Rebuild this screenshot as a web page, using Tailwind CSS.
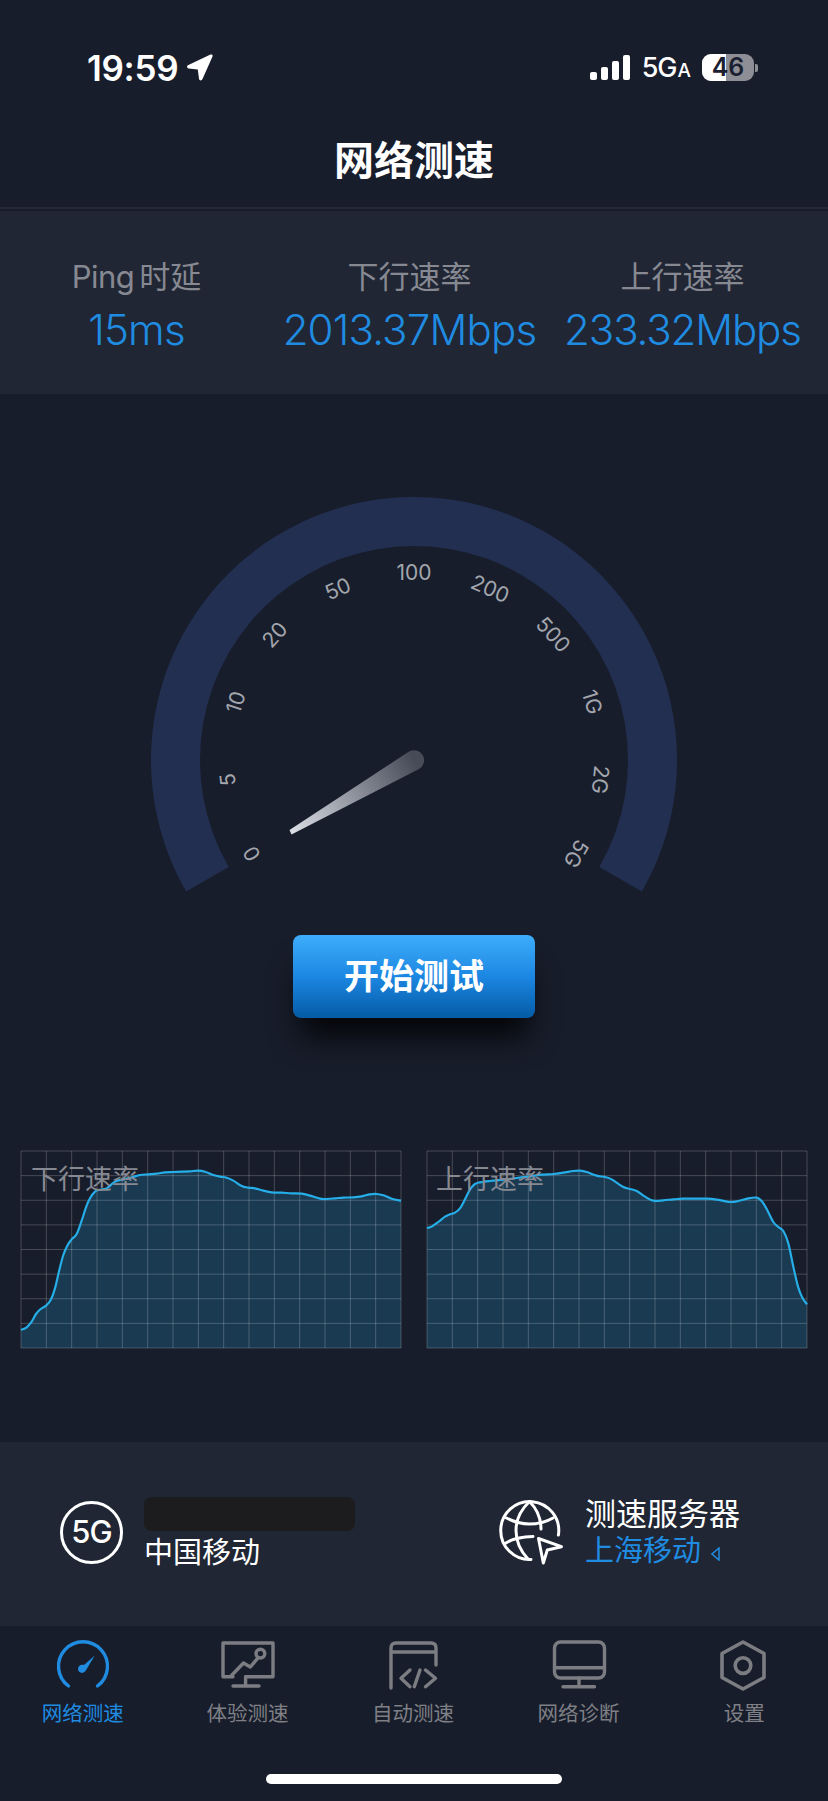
<!DOCTYPE html>
<html lang="zh-CN">
<head>
  <meta charset="UTF-8" />
  <meta name="viewport" content="width=device-width, initial-scale=1.0" />
  <title>网络测速</title>
  <script src="https://cdn.jsdelivr.net/npm/@tailwindcss/browser@4"></script>
</head>
<body class="bg-[#181d2b]">
<div class="w-[828px] h-[1801px] overflow-hidden flex flex-col bg-[#181d2b] text-white font-['Inter','Noto_Sans_CJK_SC',sans-serif]">

  <!-- 状态栏 -->
  <div class="h-[112px] pt-[54px] pl-[87px] pr-[70px] flex items-start justify-between">
    <div class="flex items-center gap-[9px] h-[27px]">
      <span class="mt-[2px] text-[35px] leading-none font-semibold tracking-[-0.3px]">19:59</span>
      <svg class="w-[26px] h-[27px]" viewBox="0 0 26 27"><path d="M23.5 0.6 C25 0 26 1 25.5 2.5 L15.5 25 C14.7 27 12.3 26.8 12 24.8 L10.8 15.6 L1.7 14.4 C-0.4 14 -0.5 11.8 1.4 11 Z" fill="#fff"/></svg>
    </div>
    <div class="flex items-center h-[27px]">
      <div class="flex items-end gap-[4px] h-[25px]">
        <div class="w-[7px] h-[8px] rounded-[2px] bg-white"></div>
        <div class="w-[7px] h-[13px] rounded-[2px] bg-white"></div>
        <div class="w-[7px] h-[19px] rounded-[2px] bg-white"></div>
        <div class="w-[7px] h-[25px] rounded-[2px] bg-white"></div>
      </div>
      <div class="ml-[12px] mt-[2px] whitespace-nowrap text-[27px] leading-[27px] font-medium tracking-[-1px]">5G<span class="ml-[1px] text-[19px]">A</span></div>
      <div class="ml-[12px] relative w-[52px] h-[27px] rounded-[9px] bg-[#8e8f96] flex items-center justify-center">
        <div class="absolute inset-y-0 left-0 w-[24px] rounded-l-[9px] bg-white"></div>
        <span class="relative text-[25px] leading-[27px] font-semibold text-[#1a2030]">46</span>
      </div>
      <div class="ml-[1px] w-[3px] h-[8px] rounded-r-[2px] bg-[#8e8f96]"></div>
    </div>
  </div>

  <!-- 标题 -->
  <div class="h-[97px] flex items-start justify-center border-b-[2px] border-[#242935]">
    <h1 class="text-[40px] leading-none font-bold mt-[29px]">网络测速</h1>
  </div>

  <!-- 测速结果 -->
  <div class="mt-[2px] h-[183px] pr-[9px] grid grid-cols-3 bg-[#202633] text-center">
    <div class="pt-[48px]">
      <div class="text-[31px] leading-[36px] text-[#878992]"><span class="tracking-[-0.5px]">Ping</span><span class="ml-[5px]">时延</span></div>
      <div class="mt-[11px] text-[42px] leading-[48px] font-light tracking-[-0.8px] text-[#1f8ce2]">15ms</div>
    </div>
    <div class="pt-[48px] whitespace-nowrap">
      <div class="text-[31px] leading-[36px] text-[#878992]">下行速率</div>
      <div class="mt-[11px] text-[42px] leading-[48px] font-light tracking-[-0.8px] text-[#1f8ce2]">2013.37Mbps</div>
    </div>
    <div class="pt-[48px] whitespace-nowrap">
      <div class="text-[31px] leading-[36px] text-[#878992]">上行速率</div>
      <div class="mt-[11px] text-[42px] leading-[48px] font-light tracking-[-1.1px] text-[#1f8ce2]">233.32Mbps</div>
    </div>
  </div>

  <!-- 仪表盘 -->
  <svg class="mt-[96px] w-[828px] h-[410px] shrink-0" viewBox="0 490 828 410">
    <defs>
      <linearGradient id="needle" gradientUnits="userSpaceOnUse" x1="290" y1="832" x2="414" y2="760">
        <stop offset="0" stop-color="#dcdfe6"/>
        <stop offset="1" stop-color="#474b58"/>
      </linearGradient>
    </defs>
    <path d="M186.2 891.5 A263 263 0 1 1 641.8 891.5 L599.3 867 A214 214 0 1 0 228.7 867 Z" fill="#222f50"/>
    <g class="fill-[#a3a6ad] text-[21px] font-normal" text-anchor="middle">
      <text x="414" y="580" transform="rotate(-120 414 760)">0</text>
      <text x="414" y="580" transform="rotate(-96 414 760)">5</text>
      <text x="414" y="580" transform="rotate(-72 414 760)">10</text>
      <text x="414" y="580" transform="rotate(-48 414 760)">20</text>
      <text x="414" y="580" transform="rotate(-24 414 760)">50</text>
      <text x="414" y="580">100</text>
      <text x="414" y="580" transform="rotate(24 414 760)">200</text>
      <text x="414" y="580" transform="rotate(48 414 760)">500</text>
      <text x="414" y="580" transform="rotate(72 414 760)">1G</text>
      <text x="414" y="580" transform="rotate(96 414 760)">2G</text>
      <text x="414" y="580" transform="rotate(120 414 760)">5G</text>
    </g>
    <path d="M289.5 830 L409 751.5 A10 10 0 0 1 419 769 L291.5 834.5 Z" fill="url(#needle)"/>
  </svg>

  <!-- 开始按钮 -->
  <button class="mt-[35px] mx-auto w-[242px] h-[83px] shrink-0 rounded-[8px] bg-linear-to-b from-[#3dadfb] via-[#1c87e2] to-[#055ba6] text-[35px] font-bold shadow-[0_26px_30px_-8px_rgba(0,0,0,0.85)]">开始测试</button>

  <!-- 速率曲线 -->
  <div class="mt-[133px] px-[21px] flex gap-[26px]">
    <div class="relative w-[380px] h-[197px]">
      <svg id="chart-down" class="w-full h-full overflow-visible" viewBox="0 0 1140 591"></svg>
      <span class="absolute left-[10px] top-[13px] text-[27px] leading-[32px] text-[#878992]">下行速率</span>
    </div>
    <div class="relative w-[380px] h-[197px]">
      <svg id="chart-up" class="w-full h-full overflow-visible" viewBox="0 0 1140 591"></svg>
      <span class="absolute left-[9px] top-[13px] text-[27px] leading-[32px] text-[#878992]">上行速率</span>
    </div>
  </div>

  <!-- 网络信息 -->
  <div class="mt-[94px] h-[184px] flex bg-[#202633]">
    <div class="w-[490px] pl-[60px] pt-[55px] flex items-start">
      <div class="mt-[4px] w-[63px] h-[63px] rounded-full border-[3px] border-white flex items-center justify-center text-[31px] font-medium tracking-[-1px]">5G</div>
      <div class="ml-[21px]">
        <div class="w-[211px] h-[34px] rounded-[8px] bg-[#1c1c1e]"></div>
        <div class="mt-[4px] text-[29px] leading-[36px]">中国移动</div>
      </div>
    </div>
    <div class="flex items-start pt-[53px]">
      <svg class="w-[80px] h-[75px]" viewBox="0 0 80 75" fill="none" stroke="#fff" stroke-width="3" stroke-linecap="round" stroke-linejoin="round">
        <path d="M68.4 40 A29 29 0 1 0 41 64.5"/>
        <path d="M39.5 6.5 C30.5 15 26 25 26 35.5 C26 45.5 30 55.5 38 64"/>
        <path d="M39.5 6.5 C47.5 14.5 51 24 51 34"/>
        <path d="M16.5 23 C24 27 31 29 39.5 29 C48 29 56 27 63 23"/>
        <path d="M16 48 C22 44 30 42 43 41.5"/>
        <path d="M48.5 43.5 L71.5 51.7 L57.3 55 L53.3 68 Z"/>
      </svg>
      <div class="ml-[15px] whitespace-nowrap">
        <div class="text-[31px] leading-[36px] mt-[1px]">测速服务器</div>
        <div class="mt-[1px] flex items-center text-[29px] leading-[36px] text-[#1f8ce2]">上海移动
          <svg class="ml-[10px] mt-[6px] w-[9px] h-[14px]" viewBox="0 0 9 14" fill="none" stroke="#1f8ce2" stroke-width="1.5"><path d="M8 1 L1 7 L8 13 Z"/></svg>
        </div>
      </div>
    </div>
  </div>

  <!-- 底部导航 -->
  <div class="relative flex-1 grid grid-cols-5 text-[20.5px] leading-[24px] text-center text-[#7f8086]">
    <div class="pt-[14px] text-[#1f8ce2]">
      <svg class="mx-auto w-[60px] h-[60px]" viewBox="0 0 60 60" fill="none">
        <path d="M15.5 46 A24.5 24.5 0 1 1 44.5 46" stroke="#1f8ce2" stroke-width="3.4" stroke-linecap="round"/>
        <path d="M41.8 15.5 L33.4 29.6 C32.6 32 30 33.6 27.5 32.6 C25 31.6 24.4 28.6 25.8 26.6 C27 24.8 29.2 24.4 31 25 Z" fill="#1f8ce2"/>
      </svg>
      <div class="mt-[2px]">网络测速</div>
    </div>
    <div class="pt-[14px]">
      <svg class="mx-auto w-[60px] h-[60px]" viewBox="0 0 60 60" fill="none" stroke="#7c7d82" stroke-width="3.4" stroke-linecap="round" stroke-linejoin="round">
        <path d="M15 36.7 H5 V3 H55 V36.7 H27.6"/>
        <path d="M13.5 35.5 L25.5 23 L32.3 27 L39.4 18.6"/>
        <circle cx="42.4" cy="13.6" r="4.4"/>
        <path d="M27.6 36.7 V46 M15 46 H41"/>
      </svg>
      <div class="mt-[2px] -translate-x-[1px]">体验测速</div>
    </div>
    <div class="pt-[14px]">
      <svg class="mx-auto w-[60px] h-[60px]" viewBox="0 0 60 60" fill="none" stroke="#7c7d82" stroke-width="3.4" stroke-linecap="round" stroke-linejoin="round">
        <path d="M7 48 V8 Q7 3 12 3 H47 Q52 3 52 8 V25 M7 12 H52"/>
        <path d="M26 30 L17 38.3 L26 46.7 M36 30 L30.3 46.7 M41.5 30 L51.5 38.3 L41.5 46.7"/>
      </svg>
      <div class="mt-[2px] -translate-x-[1px]">自动测速</div>
    </div>
    <div class="pt-[14px]">
      <svg class="mx-auto w-[60px] h-[60px]" viewBox="0 0 60 60" fill="none" stroke="#7c7d82" stroke-width="3.4" stroke-linecap="round" stroke-linejoin="round">
        <rect x="4.5" y="2" width="50" height="36" rx="6"/>
        <path d="M4.5 27.7 H54.5 M29 38 V46.7 M13 46.7 H44.5"/>
      </svg>
      <div class="mt-[2px] -translate-x-[1px]">网络诊断</div>
    </div>
    <div class="pt-[14px]">
      <svg class="mx-auto w-[60px] h-[60px]" viewBox="0 0 60 60" fill="none" stroke="#7c7d82" stroke-width="3.6" stroke-linejoin="round">
        <path d="M28 2 L49 13.5 V37.5 L28 49 L7 37.5 V13.5 Z"/>
        <circle cx="28" cy="25.6" r="7.8"/>
      </svg>
      <div class="mt-[2px] -translate-x-[1px]">设置</div>
    </div>
    <div class="absolute left-[266px] top-[148px] w-[296px] h-[10px] rounded-full bg-white"></div>
  </div>
</div>

<script>
// 曲线采样点,坐标是图表内 1140x591 的画布
const downPts = [[0,537],[17,529],[32,512],[45,489],[59,474],[75,464],[89,447],[102,412],[115,357],[127,312],[140,282],[152,265],[167,249],[182,209],[195,169],[207,142],[222,122],[237,116],[257,112],[282,92],[307,85],[332,79],[357,72],[382,70],[407,68],[432,64],[457,63],[482,62],[507,61],[532,59],[552,62],[577,72],[597,77],[617,80],[637,89],[662,105],[682,110],[702,112],[727,119],[752,124],[782,125],[812,127],[842,128],[867,134],[897,143],[912,144],[942,142],[967,140],[997,139],[1022,136],[1047,130],[1067,129],[1087,133],[1112,143],[1140,149]];
const upPts = [[0,231],[14,227],[34,213],[54,197],[69,190],[84,185],[99,172],[114,145],[129,115],[144,99],[159,94],[189,90],[229,86],[269,81],[309,76],[344,71],[379,69],[409,65],[439,60],[459,59],[479,63],[509,74],[534,78],[554,85],[589,108],[609,114],[629,120],[654,137],[679,149],[709,148],[739,145],[769,143],[809,143],[839,143],[869,146],[909,153],[934,150],[964,142],[989,140],[1004,150],[1019,174],[1039,213],[1054,228],[1069,240],[1084,277],[1099,347],[1114,410],[1127,442],[1140,460]];

function smoothPath(pts) {
  let d = `M${pts[0][0]} ${pts[0][1]}`;
  for (let i = 0; i < pts.length - 1; i++) {
    const p0 = pts[i - 1] || pts[i], p1 = pts[i], p2 = pts[i + 1], p3 = pts[i + 2] || p2;
    const c1x = p1[0] + (p2[0] - p0[0]) / 6, c1y = p1[1] + (p2[1] - p0[1]) / 6;
    const c2x = p2[0] - (p3[0] - p1[0]) / 6, c2y = p2[1] - (p3[1] - p1[1]) / 6;
    d += ` C${c1x} ${c1y} ${c2x} ${c2y} ${p2[0]} ${p2[1]}`;
  }
  return d;
}

function drawChart(id, pts) {
  let grid = '';
  for (let i = 0; i <= 15; i++) grid += `M${i * 76} 0V591`;
  for (let i = 0; i <= 8; i++) grid += `M0 ${i * 73.875}H1140`;
  const line = smoothPath(pts);
  document.getElementById(id).innerHTML =
    `<path d="${line} L1140 591 L0 591 Z" fill="#1a3a52"/>` +
    `<path d="${grid}" fill="none" stroke="#fff" stroke-opacity="0.2" stroke-width="3"/>` +
    `<path d="${line}" fill="none" stroke="#25aee8" stroke-width="6.5"/>`;
}

drawChart('chart-down', downPts);
drawChart('chart-up', upPts);
</script>
</body>
</html>
